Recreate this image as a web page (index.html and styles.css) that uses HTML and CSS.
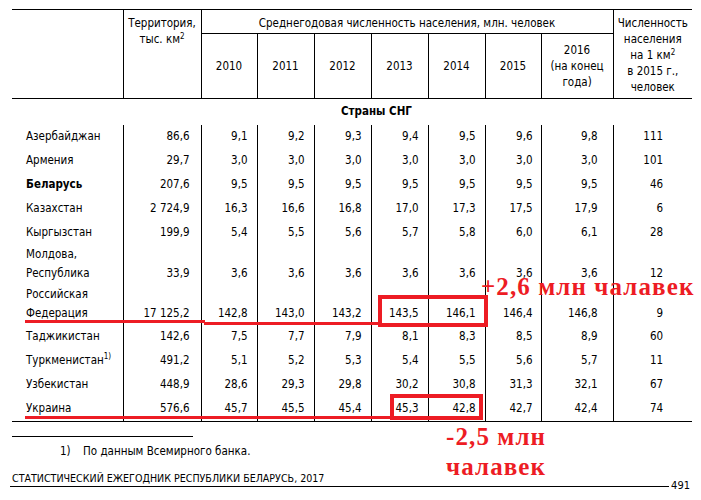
FILE: index.html
```html
<!DOCTYPE html>
<html lang="ru">
<head>
<meta charset="utf-8">
<title>Страны СНГ</title>
<link rel="stylesheet" href="styles.css">
</head>
<body>
<div class="page">
  <table class="stat">
    <colgroup>
      <col class="w-name"><col class="w-terr"><col class="w-56"><col class="w-57"><col class="w-57"><col class="w-57"><col class="w-57"><col class="w-56"><col class="w-72"><col class="w-dens">
    </colgroup>
    <thead>
      <tr class="h1">
        <th rowspan="2" class="hc-name"></th>
        <th rowspan="2" class="hc-top">Территория,<br>тыс. км<sup>2</sup></th>
        <th colspan="7" class="hc-span">Среднегодовая численность населения, млн. человек</th>
        <th rowspan="2" class="hc-top hc-last">Численность<br>населения<br>на 1 км<sup>2</sup><br>в 2015 г.,<br>человек</th>
      </tr>
      <tr class="h2">
        <th>2010</th><th>2011</th><th>2012</th><th>2013</th><th>2014</th><th>2015</th><th>2016<br>(на конец<br>года)</th>
      </tr>
    </thead>
    <tbody>
      <tr class="group"><td colspan="10">Страны СНГ</td></tr>
      <tr><td>Азербайджан</td><td>86,6</td><td>9,1</td><td>9,2</td><td>9,3</td><td>9,4</td><td>9,5</td><td>9,6</td><td>9,8</td><td>111</td></tr>
      <tr><td>Армения</td><td>29,7</td><td>3,0</td><td>3,0</td><td>3,0</td><td>3,0</td><td>3,0</td><td>3,0</td><td>3,0</td><td>101</td></tr>
      <tr><td class="bold">Беларусь</td><td>207,6</td><td>9,5</td><td>9,5</td><td>9,5</td><td>9,5</td><td>9,5</td><td>9,5</td><td>9,5</td><td>46</td></tr>
      <tr><td>Казахстан</td><td>2 724,9</td><td>16,3</td><td>16,6</td><td>16,8</td><td>17,0</td><td>17,3</td><td>17,5</td><td>17,9</td><td>6</td></tr>
      <tr><td>Кыргызстан</td><td>199,9</td><td>5,4</td><td>5,5</td><td>5,6</td><td>5,7</td><td>5,8</td><td>6,0</td><td>6,1</td><td>28</td></tr>
      <tr class="two"><td>Молдова,<br>Республика</td><td>33,9</td><td>3,6</td><td>3,6</td><td>3,6</td><td>3,6</td><td>3,6</td><td>3,6</td><td>3,6</td><td>12</td></tr>
      <tr class="two"><td>Российская<br>Федерация</td><td>17 125,2</td><td>142,8</td><td>143,0</td><td>143,2</td><td>143,5</td><td>146,1</td><td>146,4</td><td>146,8</td><td>9</td></tr>
      <tr><td>Таджикистан</td><td>142,6</td><td>7,5</td><td>7,7</td><td>7,9</td><td>8,1</td><td>8,3</td><td>8,5</td><td>8,9</td><td>60</td></tr>
      <tr><td>Туркменистан<sup class="fn">1)</sup></td><td>491,2</td><td>5,1</td><td>5,2</td><td>5,3</td><td>5,4</td><td>5,5</td><td>5,6</td><td>5,7</td><td>11</td></tr>
      <tr><td>Узбекистан</td><td>448,9</td><td>28,6</td><td>29,3</td><td>29,8</td><td>30,2</td><td>30,8</td><td>31,3</td><td>32,1</td><td>67</td></tr>
      <tr><td>Украина</td><td>576,6</td><td>45,7</td><td>45,5</td><td>45,4</td><td>45,3</td><td>42,8</td><td>42,7</td><td>42,4</td><td>74</td></tr>
    </tbody>
  </table>

  <div class="footnote-rule"></div>
  <p class="footnote"><span class="fn-mark">1)</span>По данным Всемирного банка.</p>
  <p class="running">СТАТИСТИЧЕСКИЙ ЕЖЕГОДНИК РЕСПУБЛИКИ БЕЛАРУСЬ, 2017</p>
  <div class="page-foot"><span class="foot-line"></span><span class="page-no">491</span></div>

  <div class="mark line-ru1"></div>
  <div class="mark line-ru2"></div>
  <div class="mark box-ru"></div>
  <div class="mark line-ua"></div>
  <div class="mark box-ua"></div>
  <div class="note note-plus">+2,6 млн чалавек</div>
  <div class="note note-minus">-2,5 млн<br>чалавек</div>
</div>
</body>
</html>
```

FILE: styles.css
```css
html, body {
  margin: 0;
  padding: 0;
  background: #fff;
}

body {
  font-family: "DejaVu Sans Condensed", "DejaVu Sans", sans-serif;
  font-size: 11.5px;
  color: #000;
}

.page {
  position: relative;
  width: 701px;
  height: 500px;
  padding: 9px 9px 0 12px;
  box-sizing: border-box;
  overflow: hidden;
}

/* ---------- table ---------- */
.stat {
  width: 680px;
  border-collapse: collapse;
  table-layout: fixed;
  border-top: 1px solid #000;
  border-bottom: 1px solid #000;
}

.w-name { width: 111px; }
.w-terr { width: 78px; }
.w-56 { width: 56px; }
.w-57 { width: 57px; }
.w-72 { width: 72px; }
.w-dens { width: 79px; }

.stat th {
  font-weight: normal;
  text-align: center;
  padding: 0;
  line-height: 16px;
  border-left: 1px solid #000;
}

.stat th.hc-name { border-left: none; }

.stat thead { border-bottom: 1px solid #000; }

.h1 { height: 24px; }
.h2 { height: 65px; }

.hc-span {
  border-bottom: 1px solid #000;
  padding-top: 2px !important;
  vertical-align: middle;
}

.hc-top {
  vertical-align: top;
  padding-top: 5px !important;
}

.h2 th { vertical-align: middle; }

.stat sup {
  font-size: 8px;
  line-height: 0;
  vertical-align: 4px;
}

.stat sup.fn {
  font-size: 8px;
  vertical-align: 5px;
}

/* body cells */
.stat td {
  padding: 2px 9px 3px 0;
  line-height: 19px;
  text-align: right;
  vertical-align: bottom;
  border-left: 1px solid #000;
  white-space: nowrap;
}

.stat td:first-child {
  text-align: left;
  padding-left: 14px;
  padding-right: 0;
  border-left: none;
}

.stat td:nth-child(2) { padding-right: 11px; }
.stat td:nth-child(8) { padding-right: 8px; }
.stat td:nth-child(9) { padding-right: 15px; }
.stat td:nth-child(10) { padding-right: 29px; }

.stat tr.two td {
  padding-top: 0;
  padding-bottom: 2px;
}

.stat tr.group td {
  border-left: none;
  text-align: left;
  padding: 3px 0 4px 329px;
  font-weight: bold;
  line-height: 19px;
}

.bold { font-weight: bold; }

/* ---------- footnote & footer ---------- */
.footnote-rule {
  width: 181px;
  margin-top: 14px;
  border-top: 1px solid #000;
}

.footnote {
  margin: 6px 0 0;
  line-height: 17px;
  padding-left: 48px;
}

.fn-mark {
  display: inline-block;
  width: 23px;
}

.running {
  margin: 11px 0 0;
  font-size: 10.6px;
  line-height: 14px;
}

.page-foot {
  display: flex;
  align-items: center;
  margin-left: -2px;
  margin-top: -6px;
  width: 680px;
  height: 14px;
}

.foot-line {
  flex: 1;
  border-top: 1px solid #000;
}

.page-no {
  padding-left: 2px;
  font-size: 11px;
  line-height: 14px;
}

/* ---------- red annotations (overlays) ---------- */
.mark {
  position: absolute;
  background: #ed1c24;
}

.line-ru1 { left: 25px; top: 320px; width: 180px; height: 3px; }
.line-ru2 { left: 204px; top: 322px; width: 176px; height: 3px; }

.box-ru {
  background: transparent;
  left: 378px;
  top: 295px;
  width: 102px;
  height: 24px;
  border: 4px solid #ed1c24;
}

.line-ua { left: 25px; top: 416px; width: 366px; height: 3px; }

.box-ua {
  background: transparent;
  left: 390px;
  top: 394px;
  width: 85px;
  height: 18px;
  border: 4px solid #ed1c24;
}

.note {
  position: absolute;
  color: #ed1c24;
  font-family: "Liberation Serif", "Times New Roman", serif;
  font-weight: bold;
  font-size: 25px;
  letter-spacing: 1.1px;
  line-height: 30px;
  white-space: nowrap;
}

.note-plus { left: 481px; top: 272px; }
.note-minus { left: 446px; top: 422px; }
```
